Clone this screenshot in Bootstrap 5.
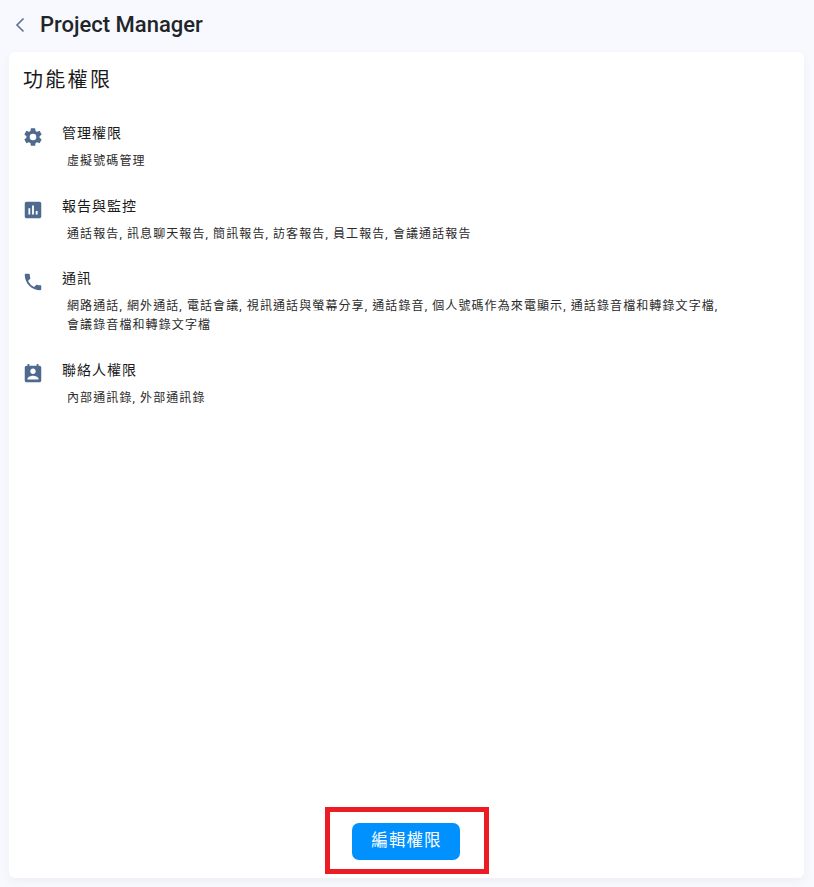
<!DOCTYPE html>
<html lang="zh-Hant">

<head>
  <meta charset="UTF-8">
  <meta name="viewport" content="width=device-width, initial-scale=1.0">
  <title>Project Manager</title>
  <link href="https://cdn.jsdelivr.net/npm/bootstrap@5.3.0/dist/css/bootstrap.min.css" rel="stylesheet">
  <style>
    html, body { height: 100%; }
    body { background: #f8f9fe; font-family: Roboto, "Noto Sans CJK TC", sans-serif; color: #1f2329; }
    .page-wrap { height: 887px; padding: 0 10px 9px 9px; }
    .top-bar { height: 52px; padding: 0 0 2px 6px; gap: 15px; }
    .top-title { font-size: 22px; font-weight: 500; line-height: 1; margin: 0; color: #212529; }
    .perm-card { border-radius: 6px; box-shadow: 0 4px 10px rgba(40, 50, 90, .05); border: 0; }
    .perm-list { padding: 14px 14px 0; }
    .perm-heading { font-size: 20px; font-weight: 400; letter-spacing: 2.3px; line-height: 28px; margin: 0 0 29px; color: #1a1a1a; }
    .perm-row { gap: 18px; margin-bottom: 25.2px; }
    .perm-icon { width: 22px; height: 22px; flex: none; margin: 3px 0 0 -1px; fill: #4f6a8f; }
    .perm-name { font-size: 14px; letter-spacing: 1px; line-height: 20px; margin-bottom: 9px; color: #1a1a1a; }
    .perm-desc { font-size: 12px; letter-spacing: 1.1px; line-height: 18.5px; padding-left: 5px; color: #2b2b2b; max-width: 665px; }
    .mark-box { border: 5px solid #ed1c24; width: 164px; height: 67px; margin-bottom: 4px; }
    .edit-btn { background: #0091ff; color: #fff; width: 108px; height: 37px; border: 0; border-radius: 7px; font-size: 16.5px; letter-spacing: 1.1px; padding: 0 0 0 2px; margin: 2px 2px 0 0; }
    .edit-btn:hover { background: #0091ff; color: #fff; }
  </style>
</head>

<body>
  <div class="page-wrap d-flex flex-column">
    <div class="top-bar d-flex align-items-center">
      <svg width="10" height="16" viewBox="0 0 10 16" fill="none" stroke="#5b7192" stroke-width="1.6">
        <path d="M8.5 1.500 2 8l6.500 6.500" />
      </svg>
      <h1 class="top-title">Project Manager</h1>
    </div>

    <div class="card perm-card flex-grow-1">
      <div class="card-body d-flex flex-column p-0">
        <div class="flex-grow-1 perm-list">
          <h2 class="perm-heading">功能權限</h2>

          <div class="d-flex perm-row">
            <svg class="perm-icon" viewBox="0 0 24 24">
              <path d="M19.14 12.94c.04-.3.06-.61.06-.94 0-.32-.02-.64-.07-.94l2.030-1.580a.49.49 0 0 0 .12-.61l-1.920-3.320a.49.49 0 0 0-.59-.22l-2.390.96c-.5-.38-1.030-.7-1.620-.94l-.36-2.540a.48.48 0 0 0-.48-.41h-3.840a.47.47 0 0 0-.47.41l-.36 2.540c-.59.24-1.130.57-1.620.94l-2.390-.96a.48.48 0 0 0-.59.22L2.740 8.870a.47.47 0 0 0 .12.61l2.030 1.580c-.05.3-.09.63-.09.94s.02.64.07.94l-2.030 1.580a.49.49 0 0 0-.12.61l1.920 3.320c.12.22.37.29.59.22l2.390-.96c.5.38 1.030.7 1.620.94l.36 2.540c.05.24.24.41.48.41h3.840c.24 0 .44-.17.47-.41l.36-2.540c.59-.24 1.130-.56 1.620-.94l2.390.96c.22.08.47 0 .59-.22l1.920-3.320a.47.47 0 0 0-.12-.61zM12 15.600A3.600 3.600 0 1 1 12 8.400a3.600 3.600 0 0 1 0 7.200z" />
            </svg>
            <div>
              <div class="perm-name">管理權限</div>
              <div class="perm-desc">虛擬號碼管理</div>
            </div>
          </div>

          <div class="d-flex perm-row">
            <svg class="perm-icon" viewBox="0 0 24 24">
              <path d="M19 3H5c-1.100 0-2 .9-2 2v14c0 1.100.9 2 2 2h14c1.100 0 2-.9 2-2V5c0-1.100-.9-2-2-2zM9 17H7v-7h2v7zm4 0h-2V7h2v10zm4 0h-2v-4h2v4z" />
            </svg>
            <div>
              <div class="perm-name">報告與監控</div>
              <div class="perm-desc">通話報告, 訊息聊天報告, 簡訊報告, 訪客報告, 員工報告, 會議通話報告</div>
            </div>
          </div>

          <div class="d-flex perm-row">
            <svg class="perm-icon" viewBox="0 0 24 24">
              <path d="M6.620 10.790a15.150 15.150 0 0 0 6.590 6.590l2.200-2.200c.27-.27.67-.36 1.020-.24 1.120.37 2.330.57 3.570.57.55 0 1 .45 1 1V20c0 .55-.45 1-1 1C10.610 21 3 13.390 3 4c0-.55.45-1 1-1h3.500c.55 0 1 .45 1 1 0 1.250.2 2.450.57 3.570.11.35.03.74-.25 1.020l-2.200 2.200z" />
            </svg>
            <div>
              <div class="perm-name">通訊</div>
              <div class="perm-desc">網路通話, 網外通話, 電話會議, 視訊通話與螢幕分享, 通話錄音, 個人號碼作為來電顯示, 通話錄音檔和轉錄文字檔, 會議錄音檔和轉錄文字檔</div>
            </div>
          </div>

          <div class="d-flex perm-row">
            <svg class="perm-icon" viewBox="0 0 24 24">
              <path d="M19 3h-1V1h-2v2H8V1H6v2H5c-1.110 0-2 .9-2 2v14c0 1.100.89 2 2 2h14c1.100 0 2-.9 2-2V5c0-1.100-.9-2-2-2zm-7 3c1.660 0 3 1.340 3 3s-1.340 3-3 3-3-1.340-3-3 1.340-3 3-3zm6 12H6v-1c0-2 4-3.100 6-3.100s6 1.100 6 3.100v1z" />
            </svg>
            <div>
              <div class="perm-name">聯絡人權限</div>
              <div class="perm-desc">內部通訊錄, 外部通訊錄</div>
            </div>
          </div>
        </div>

        <div class="d-flex justify-content-center">
          <div class="mark-box d-flex align-items-center justify-content-center">
            <button type="button" class="btn edit-btn">編輯權限</button>
          </div>
        </div>
      </div>
    </div>
  </div>
  <script src="https://cdn.jsdelivr.net/npm/bootstrap@5.3.0/dist/js/bootstrap.bundle.min.js"></script>
</body>

</html>
